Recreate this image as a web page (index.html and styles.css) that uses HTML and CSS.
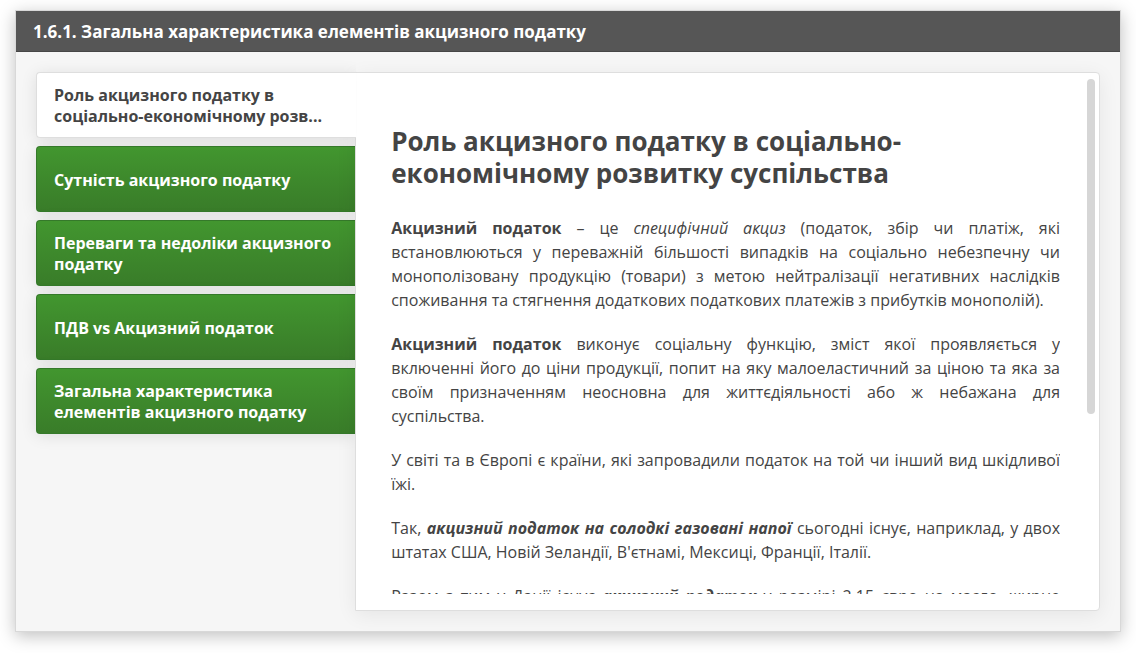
FILE: index.html
```html
<!DOCTYPE html>
<html lang="uk">
<head>
<meta charset="utf-8">
<meta name="viewport" content="width=device-width, initial-scale=1">
<title>1.6.1. Загальна характеристика елементів акцизного податку</title>
<link rel="stylesheet" href="styles.css">
</head>
<body>
<main class="card">
  <header class="card-header">
    <h1 class="card-title">1.6.1. Загальна характеристика елементів акцизного податку</h1>
  </header>
  <div class="card-body">
    <div class="tabs" role="tablist" aria-orientation="vertical">
      <button class="tab tab-active" type="button" role="tab" id="tab-1" aria-selected="true" aria-controls="panel"><span class="tab-label">Роль акцизного податку в<br>соціально-економічному розв...</span></button>
      <button class="tab" type="button" role="tab" aria-selected="false"><span class="tab-label">Сутність акцизного податку</span></button>
      <button class="tab" type="button" role="tab" aria-selected="false"><span class="tab-label">Переваги та недоліки акцизного податку</span></button>
      <button class="tab" type="button" role="tab" aria-selected="false"><span class="tab-label">ПДВ vs Акцизний податок</span></button>
      <button class="tab" type="button" role="tab" aria-selected="false"><span class="tab-label">Загальна характеристика елементів акцизного податку</span></button>
    </div>
    <section class="panel" id="panel" role="tabpanel" aria-labelledby="tab-1">
      <article class="article">
        <h2 class="article-title">Роль акцизного податку в соціально-економічному розвитку суспільства</h2>
        <p><strong>Акцизний податок</strong> – це <em>специфічний акциз</em> (податок, збір чи платіж, які встановлюються у переважній більшості випадків на соціально небезпечну чи монополізовану продукцію (товари) з метою нейтралізації негативних наслідків споживання та стягнення додаткових податкових платежів з прибутків монополій).</p>
        <p><strong>Акцизний податок</strong> виконує соціальну функцію, зміст якої проявляється у включенні його до ціни продукції, попит на яку малоеластичний за ціною та яка за своїм призначенням неосновна для життєдіяльності або ж небажана для суспільства.</p>
        <p>У світі та в Європі є країни, які запровадили податок на той чи інший вид шкідливої їжі.</p>
        <p>Так, <strong><em>акцизний податок на солодкі газовані напої</em></strong> сьогодні існує, наприклад, у двох штатах США, Новій Зеландії, В'єтнамі, Мексиці, Франції, Італії.</p>
        <p>Разом з тим у Данії існує <strong><em>акцизний податок</em></strong> у розмірі 2,15 євро на масло, жирне молоко, сир, м'ясо та інші продукти.</p>
      </article>
      <div class="scroll-track" aria-hidden="true"><div class="scroll-thumb"></div></div>
    </section>
  </div>
</main>
</body>
</html>
```
FILE: styles.css
```css
* {
  box-sizing: border-box;
}

body {
  margin: 0;
  background: #fff;
  color: #444;
  font-family: "Open Sans", "Noto Sans", sans-serif;
  font-size: 16px;
  line-height: 24px;
}

.card {
  display: flex;
  flex-direction: column;
  height: calc(100vh - 31px);
  margin: 10px 15px 21px;
  background: #f6f6f6;
  border: 1px solid #d8d8d8;
  box-shadow: 0 4px 16px rgba(0, 0, 0, 0.25);
}

.card-header {
  padding: 9px 17px 7px;
  background: #565656;
  border-bottom: 1px solid #474747;
}

.card-title {
  margin: 0;
  color: #fff;
  font-size: 17px;
  font-weight: 700;
  line-height: 24px;
}

.card-body {
  display: flex;
  flex: 1;
  min-height: 0;
  padding: 20px;
}

.tabs {
  display: flex;
  flex-direction: column;
  flex: 0 0 30%;
  gap: 8px;
  align-self: flex-start;
}

.tab {
  display: flex;
  align-items: center;
  min-height: 66px;
  padding: 6px 18px 4px 17px;
  border: 1px solid #35792a;
  border-right: 0;
  border-radius: 4px 0 0 4px;
  background: linear-gradient(#42962f, #397c29);
  box-shadow: 0 2px 16px rgba(0, 0, 0, 0.1);
  color: #fff;
  font-family: inherit;
  font-size: 16px;
  font-weight: 700;
  line-height: 21px;
  text-align: left;
  cursor: pointer;
}

.tab-active {
  position: relative;
  z-index: 1;
  margin-right: -1px;
  border-color: #dedede;
  background: #fff;
  color: #444;
  clip-path: inset(-20px 0 -8px -20px);
}

.panel {
  display: flex;
  flex: 1;
  min-width: 0;
  padding: 6px 4px 16px 35px;
  border: 1px solid #dedede;
  border-radius: 0 4px 4px 0;
  background: #fff;
  box-shadow: 0 4px 20px rgba(0, 0, 0, 0.07);
}

.article {
  flex: 1;
  min-width: 0;
  padding-top: 46px;
  overflow: hidden;
}

.article-title {
  margin: 0 0 27px;
  font-size: 26px;
  font-weight: 700;
  line-height: 32px;
}

.article p {
  margin: 0 0 20px;
  text-align: justify;
}

.scroll-track {
  flex: 0 0 8px;
  margin-left: 27px;
}

.scroll-thumb {
  width: 8px;
  height: 65%;
  border-radius: 4px;
  background: #d6d6d6;
}
```
